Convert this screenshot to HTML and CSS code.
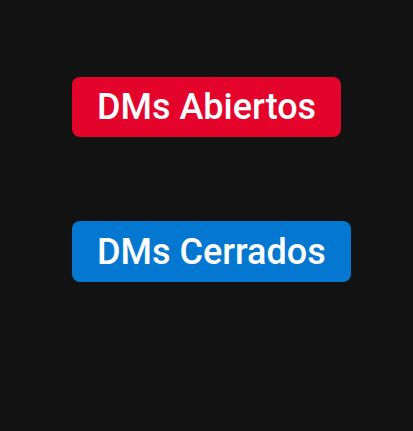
FILE: index.html
```html
<!DOCTYPE html>
<html lang="es">
<head>
<meta charset="utf-8">
<title>DMs</title>
<link rel="stylesheet" href="styles.css">
</head>
<body>
  <main class="panel">
    <button class="dm-btn dm-open" type="button">DMs Abiertos</button>
    <button class="dm-btn dm-closed" type="button">DMs Cerrados</button>
  </main>
</body>
</html>
```

FILE: styles.css
```css
html, body {
  margin: 0;
  padding: 0;
  background: #121212;
  height: 100%;
}

.panel {
  display: flex;
  flex-direction: column;
  align-items: flex-start;
  gap: 84px;
  padding: 77px 0 0 72px;
}

.dm-btn {
  border: none;
  margin: 0;
  height: 60px;
  padding: 0 25px;
  border-radius: 8px;
  color: #ffffff;
  font-family: Roboto, "Noto Sans", sans-serif;
  font-weight: 500;
  font-size: 36px;
  line-height: 60px;
  cursor: pointer;
}

.dm-open {
  background: #e4032b;
}

.dm-closed {
  background: #0477d1;
  height: 61px;
}
```
